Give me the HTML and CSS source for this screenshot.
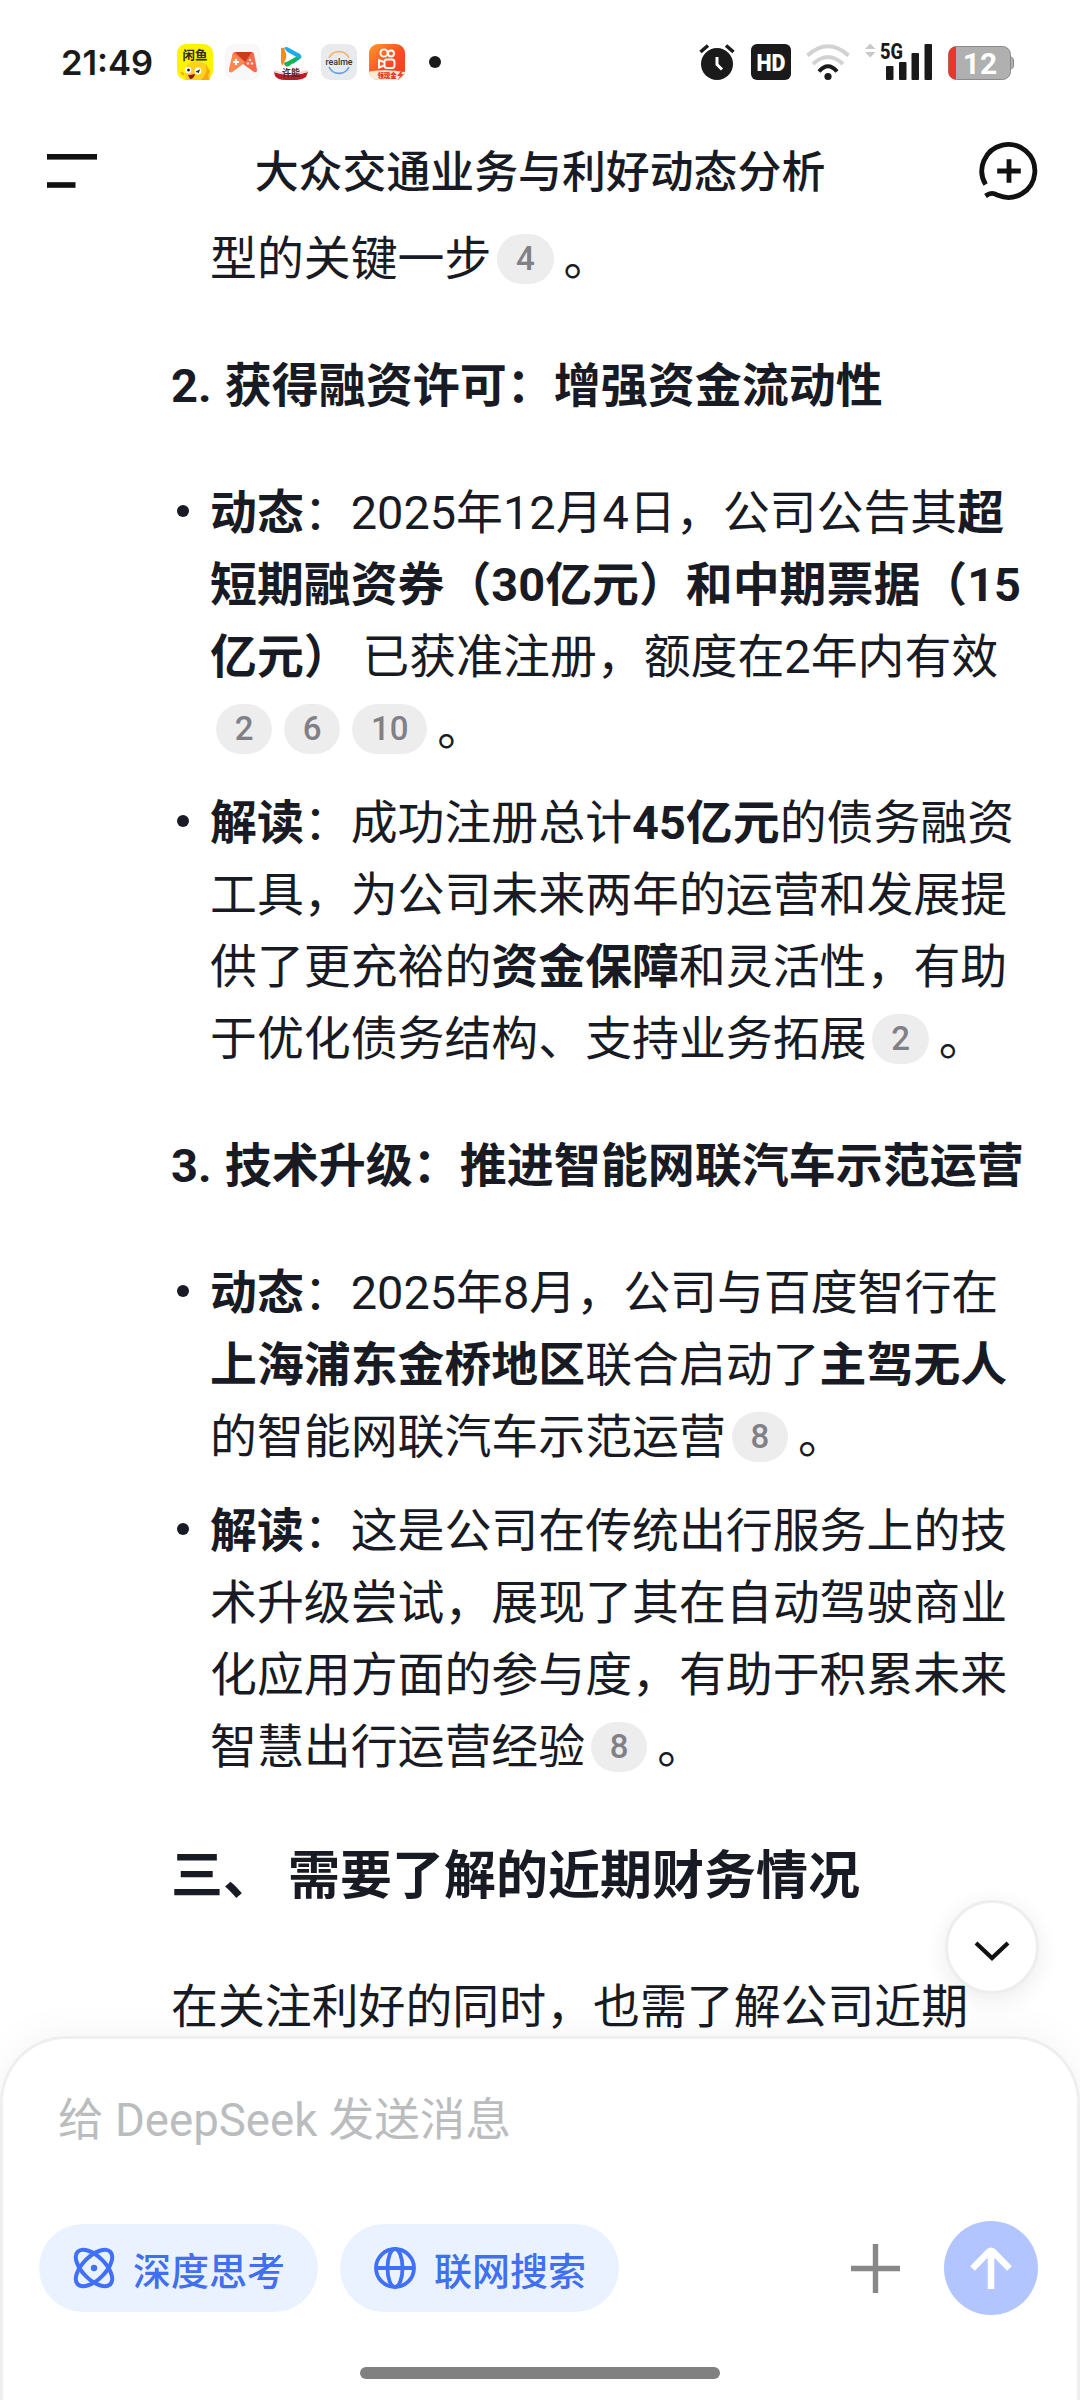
FILE: index.html
```html
<!DOCTYPE html>
<html lang="zh-CN">

<head>
  <meta charset="UTF-8">
  <meta name="viewport" content="width=device-width, initial-scale=1.0">
  <title>大众交通业务与利好动态分析</title>
  <link rel="stylesheet" href="styles.css">
</head>

<body>
  <div class="screen">
    <!-- 状态栏 -->
    <div class="status-bar">
      <span class="time">21:49</span>
      <div class="apps">
        <svg width="36" height="36" viewBox="0 0 36 36">
          <rect width="36" height="36" rx="9" fill="#fcf305"/>
          <path d="M8 36V27Q9 17 20 17L25 18L29 20L31 24L33 27L33 36Z" fill="#ffd21c"/>
          <path d="M29 20L31 24L33 27L31 31L32 36H24Q31 30 29 20Z" fill="#f7a90c"/>
          <circle cx="11" cy="26" r="3.2" fill="#fff"/><circle cx="21" cy="27" r="3.4" fill="#fff"/>
          <circle cx="11.5" cy="26" r="1.5" fill="#222"/>
          <path d="M19 28L22 26.5L21 29" stroke="#222" stroke-width="1.2" fill="none"/>
          <path d="M11 31Q14 31 18 30Q17 35 13 35Z" fill="#8e1610"/>
          <path d="M4 28L7 31" stroke="#f7a90c" stroke-width="2"/>
          <text x="18" y="15.5" text-anchor="middle" font-size="12.5" font-weight="700" fill="#2b2b08">闲鱼</text>
        </svg>
        <svg width="36" height="36" viewBox="0 0 36 36">
          <rect width="36" height="36" rx="9" fill="#f8f8f8"/>
          <path d="M8 9Q9 8 11 8H26Q29 8 29 10L32 26Q32 29 29 28L18 20L7 28Q4 29 4 26Z" fill="#f4694a"/>
          <path d="M10 8H27L20 18Z" fill="#c93b1b"/>
          <path d="M8 9L20 18L7 28Q4 29 4 26Z" fill="#ff8850"/>
          <path d="M11 15V21M8 18H14" stroke="#fff" stroke-width="1.8"/>
          <g fill="#ffe1d8"><circle cx="25" cy="16" r="1.2"/><circle cx="23" cy="19.5" r="1.2"/><circle cx="27" cy="19.5" r="1.2"/></g>
        </svg>
        <svg width="36" height="36" viewBox="0 0 36 36">
          <path d="M8 5Q8 3 11 4L14 12L10 21Q8 21 8 18Z" fill="#ff8a12"/>
          <path d="M11 4Q13 2 16 4L27 10Q30 13 27 15L20 20L16 10Z" fill="#1badea"/>
          <path d="M27 14L16 22Q12 24 11 19L18 14Z" fill="#12b64d"/>
          <path d="M14 8.5V17L21.5 12.8Z" fill="#fff" stroke="#fff" stroke-width="1.5"/>
          <path d="M1 28Q9 31 18 31T35 28L33 33Q29 36 24 36H12Q5 36 2 32Z" fill="#b81e26"/>
          <path d="M1 27Q16 33 35 27" fill="none" stroke="#f7d4d2" stroke-width="2"/>
          <text x="18" y="31.5" text-anchor="middle" font-size="9" font-weight="700" fill="#57201d">许能</text>
        </svg>
        <svg width="36" height="36" viewBox="0 0 36 36">
          <rect width="36" height="36" rx="9" fill="#e8eaee"/>
          <path d="M8 14A11 11 0 0 1 28 14" fill="none" stroke="#f2b765" stroke-width="1.6"/>
          <path d="M8 23A11 11 0 0 0 28 23" fill="none" stroke="#56a1ee" stroke-width="1.6"/>
          <text x="18" y="21" text-anchor="middle" font-size="8.8" font-weight="500" fill="#333">realme</text>
        </svg>
        <svg width="36" height="36" viewBox="0 0 36 36">
          <defs>
            <linearGradient id="orange" x1="0" y1="0" x2="1" y2="1">
              <stop offset="0" stop-color="#ff9a2a"/><stop offset=".55" stop-color="#fa4a25"/><stop offset="1" stop-color="#f23a2a"/>
            </linearGradient>
          </defs>
          <rect width="36" height="36" rx="9" fill="url(#orange)"/>
          <g fill="none" stroke="#fff" stroke-width="1.9">
            <circle cx="15" cy="9" r="3.6"/><circle cx="22" cy="9.5" r="3"/>
            <rect x="15.5" y="15.5" width="10" height="8.5" rx="2.5"/>
            <path d="M15 18L10 16.2V23.6L15 21.5"/>
          </g>
          <path d="M0 27.5Q18 25 36 28Q35 36 27 36H9Q1 36 0 27.5Z" fill="#fdebd3"/>
          <text x="18" y="34" text-anchor="middle" font-size="6.4" font-weight="900" fill="#df2c21">领现金</text>
          <path d="M32 27L28 32H31L29 36L35 30H32L34 27Z" fill="#e9452b"/>
        </svg>
      </div>
      <span class="more-dot"></span>

      <div class="indicators">
        <!-- 闹钟 -->
        <svg width="36" height="36" viewBox="0 0 36 36">
          <circle cx="18" cy="20" r="16" fill="#1a1a1a"/>
          <path d="M1.5 8L9 1.5M34.5 8L27 1.5" stroke="#1a1a1a" stroke-width="3.6"/>
          <path d="M18 13V20.5L23 25.5" fill="none" stroke="#fff" stroke-width="3"/>
        </svg>
        <svg class="hd" width="40" height="36" viewBox="0 0 40 36">
          <rect width="40" height="36" rx="6" fill="#1a1a1a"/>
          <text x="20" y="26.5" text-anchor="middle" font-size="24" font-weight="900" textLength="29" lengthAdjust="spacingAndGlyphs" fill="#fff">HD</text>
        </svg>
        <svg class="wifi" width="44" height="36" viewBox="0 0 44 36">
          <g fill="none" stroke-width="4">
            <path d="M1.5 11.5Q22 -7 42.5 11.5" stroke="#d2d2d2"/>
            <path d="M7 20Q22 6 37 20" stroke="#d2d2d2"/>
            <path d="M13 27.5Q22 17 31 27.5" stroke="#1a1a1a"/>
          </g>
          <circle cx="22" cy="32.5" r="3.6" fill="#1a1a1a"/>
        </svg>
        <!-- 5G 信号 -->
        <svg class="signal" width="67" height="38" viewBox="0 0 67 38">
          <path d="M0 7L5.2 1.5L10.5 7ZM0 10L5.2 15.5L10.5 10Z" fill="#c9c9c9"/>
          <text x="15" y="17" font-size="21.5" font-weight="800" textLength="23" lengthAdjust="spacingAndGlyphs" fill="#1a1a1a">5G</text>
          <g fill="#1a1a1a">
            <rect x="21" y="24" width="7.5" height="14" rx="1"/>
            <rect x="34" y="20" width="7.5" height="18" rx="1"/>
            <rect x="46.5" y="11" width="7.5" height="27" rx="1"/>
            <rect x="59.5" y="2" width="7.5" height="36" rx="1"/>
          </g>
        </svg>
        <svg class="battery" width="66" height="34" viewBox="0 0 66 34">
          <path d="M60 11H63Q65.5 12 65.5 14V20Q65.5 22 63 23H60Z" fill="#b0b0b0" stroke="#8a8a8a"/>
          <rect x=".5" y=".5" width="62" height="33" rx="8" fill="#b0b0b0" stroke="#8a8a8a"/>
          <path d="M8 .5V33.5Q.5 33 .5 25V9Q.5 1 8 .5Z" fill="#e8382c"/>
          <text x="32" y="28" text-anchor="middle" font-size="30" font-weight="700" fill="#fff">12</text>
        </svg>
      </div>
    </div>

    <!-- 顶部标题 -->
    <header class="header">
      <svg width="50" height="34" viewBox="0 0 50 34" fill="#111">
        <rect width="50" height="5.6"/>
        <rect y="28.2" width="28.5" height="5.6"/>
      </svg>
      <h1>大众交通业务与利好动态分析</h1>
      <svg width="58" height="58" viewBox="0 0 58 58" fill="none" stroke="#111" stroke-width="4.8">
        <path d="M5.6 42.5A26.5 26.5 0 1 1 18 53.3C13.500 51 10.500 50.5 5.500 54"/>
        <path d="M29 17.2V40.8M17.2 29H40.8"/>
      </svg>
    </header>

    <!-- 回答内容 -->
    <main class="answer">
      <p class="tail">型的关键一步<span class="ref">4</span>。</p>

      <h3>2. 获得融资许可：增强资金流动性</h3>
      <ul>
        <li><div><b>动态</b>：2025年12月4日，公司公告其<b>超<br>短期融资券（30亿元）和中期票据（15<br>亿元）</b> 已获准注册，额度在2年内有效<br><span class="ref">2</span><span class="ref">6</span><span class="ref">10</span>。</div></li>
        <li><div><b>解读</b>：成功注册总计<b>45亿元</b>的债务融资<br>工具，为公司未来两年的运营和发展提<br>供了更充裕的<b>资金保障</b>和灵活性，有助<br>于优化债务结构、支持业务拓展<span class="ref">2</span>。</div></li>
      </ul>

      <h3>3. 技术升级：推进智能网联汽车示范运营</h3>
      <ul>
        <li><div><b>动态</b>：2025年8月，公司与百度智行在<br><b>上海浦东金桥地区</b>联合启动了<b>主驾无人</b><br>的智能网联汽车示范运营<span class="ref">8</span>。</div></li>
        <li><div><b>解读</b>：这是公司在传统出行服务上的技<br>术升级尝试，展现了其在自动驾驶商业<br>化应用方面的参与度，有助于积累未来<br>智慧出行运营经验<span class="ref">8</span>。</div></li>
      </ul>

      <h2>三、 需要了解的近期财务情况</h2>
      <p>在关注利好的同时，也需了解公司近期</p>
    </main>

    <button class="to-bottom">
      <svg width="36" height="22" viewBox="0 0 36 22" fill="none" stroke="#111" stroke-width="4.2">
        <path d="M2 3L18 18L34 3"/>
      </svg>
    </button>

    <!-- 输入框 -->
    <footer class="composer">
      <div class="placeholder">给 DeepSeek 发送消息</div>
      <div class="tools">
        <button class="chip">
          <svg width="42" height="42" viewBox="0 0 42 42" fill="none" stroke="#4070f8" stroke-width="4">
            <ellipse cx="21" cy="21" rx="23" ry="11.5" transform="rotate(45 21 21)"/>
            <ellipse cx="21" cy="21" rx="23" ry="11.5" transform="rotate(-45 21 21)"/>
            <circle cx="21" cy="21" r="3.2" fill="#4070f8" stroke="none"/>
          </svg>
          深度思考
        </button>
        <button class="chip">
          <svg width="42" height="42" viewBox="0 0 42 42" fill="none" stroke="#4070f8" stroke-width="3.8">
            <circle cx="21" cy="21" r="19"/>
            <ellipse cx="21" cy="21" rx="7.5" ry="19"/>
            <path d="M2 21H40"/>
          </svg>
          联网搜索
        </button>
        <svg class="plus" width="49" height="49" viewBox="0 0 49 49" stroke="#888" stroke-width="5.4">
          <path d="M24.5 0V49M0 24.5H49"/>
        </svg>
        <button class="send">
          <svg width="42" height="42" viewBox="0 0 42 42" fill="none" stroke="#fff" stroke-width="6.6">
            <path d="M21 42V4M2.5 21.5L18.5 5.2Q21 2.8 23.5 5.2L39.5 21.5"/>
          </svg>
        </button>
      </div>
      <div class="home-bar"></div>
    </footer>
  </div>
</body>
</html>
```

FILE: styles.css
```css
* {
  box-sizing: border-box;
}

body {
  margin: 0;
  background-color: #fff;
  color: #181b24;
  font-family: Roboto, "Noto Sans CJK SC", sans-serif;
  text-spacing-trim: space-all;
}

svg {
  display: block;
  flex: none;
  overflow: visible;
}

button {
  border: none;
  padding: 0;
  font-family: inherit;
}

.screen {
  position: relative;
  display: flex;
  flex-direction: column;
  width: 1080px;
  height: 2400px;
  overflow: hidden;
}

/* 状态栏 */
.status-bar {
  display: flex;
  align-items: center;
  height: 124px;
  padding: 0 66px 0 61px;
}

.time {
  width: 116px;
  font-family: Inter, sans-serif;
  font-size: 34.5px;
  font-weight: 600;
  color: #1a1a1a;
}

.apps {
  display: flex;
  gap: 12px;
}

.more-dot {
  width: 12px;
  height: 12px;
  margin-left: 24px;
  border-radius: 50%;
  background-color: #1a1a1a;
}

.indicators {
  display: flex;
  align-items: center;
  margin-left: auto;
}

.hd {
  margin-left: 16px;
}

.wifi {
  margin-left: 15px;
}

.signal {
  margin: -2px 0 0 15px;
}

.battery {
  margin: 2px 0 0 16px;
}

/* 标题栏 */
.header {
  display: flex;
  align-items: center;
  justify-content: space-between;
  height: 94px;
  padding: 0 42px 0 47px;
}

.header h1 {
  margin: 0;
  padding: 3px 0 0 3px;
  font-size: 43.9px;
  font-weight: 500;
  line-height: 64px;
}

/* 正文 */
.answer {
  padding: 5px 0 0 171px;
  font-size: 46.9px;
  line-height: 72px;
  white-space: nowrap;
}

.answer p,
.answer h2,
.answer h3,
.answer ul {
  margin: 0;
  padding: 0;
}

.answer b {
  font-weight: 700;
}

.answer .tail {
  padding-left: 39px;
}

.answer h3 {
  margin: 55px 0;
  font-size: 47px;
  font-weight: 700;
  word-spacing: 1.5px;
}

.answer h2 {
  margin: 55px 0;
  font-size: 52px;
  font-weight: 700;
  line-height: 78px;
}

.answer li {
  display: flex;
}

.answer li + li {
  margin-top: 22px;
}

.answer li::before {
  content: "";
  width: 12px;
  height: 12px;
  margin: 28px 21px 0 6px;
  border-radius: 50%;
  background-color: #181b24;
}

.ref {
  position: relative;
  top: -5px;
  display: inline-block;
  height: 50px;
  margin: 0 6px;
  padding: 0 18.7px;
  border-radius: 25px;
  background-color: #ededed;
  color: #808086;
  font-size: 33px;
  font-weight: 500;
  line-height: 50px;
}

.ref:last-of-type {
  margin-right: 10px;
}

.to-bottom {
  position: absolute;
  left: 945px;
  top: 1900px;
  display: flex;
  align-items: center;
  justify-content: center;
  width: 94px;
  height: 94px;
  padding-top: 8px;
  border: 3px solid #eee;
  border-radius: 50%;
  background-color: #fff;
  box-shadow: 0 6px 24px rgba(0, 0, 0, 0.08);
}

/* 底部输入区，盖在正文上 */
.composer {
  position: absolute;
  left: 0;
  right: 0;
  bottom: 0;
  display: flex;
  flex-direction: column;
  height: 364px;
  padding: 0 39px;
  border: 3px solid #efefef;
  border-bottom: none;
  border-radius: 66px 66px 0 0;
  background-color: #fff;
  box-shadow: 0 0 44px rgba(0, 0, 0, 0.05);
}

.placeholder {
  margin: 48px 0 0 16px;
  font-size: 45.6px;
  line-height: 68px;
  color: #bbbcbe;
}

.tools {
  display: flex;
  align-items: center;
  height: 94px;
  margin: 66px 0 0 -3px;
}

.chip {
  display: flex;
  align-items: center;
  width: 279px;
  height: 88px;
  margin-right: 22px;
  padding-left: 34px;
  gap: 18px;
  border-radius: 44px;
  background-color: #ebf2ff;
  color: #4070f0;
  font-size: 38px;
  font-weight: 500;
  white-space: nowrap;
}

.plus {
  margin-left: auto;
}

.send {
  display: flex;
  align-items: center;
  justify-content: center;
  width: 94px;
  height: 94px;
  margin-left: 44px;
  border-radius: 50%;
  background-color: #b2c5ff;
}

.home-bar {
  align-self: center;
  width: 360px;
  height: 12px;
  margin-top: 52px;
  border-radius: 6px;
  background-color: #808080;
}
```
